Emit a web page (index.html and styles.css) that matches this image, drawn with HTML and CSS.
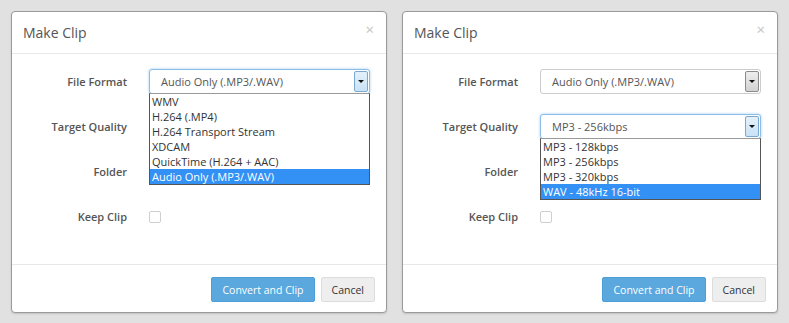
FILE: index.html
```html
<!DOCTYPE html>
<html lang="en">
<head>
    <meta charset="UTF-8">
    <title>Make Clip</title>
    <link rel="stylesheet" href="styles.css">
</head>
<body>
    <div class="page">
        <!-- Dialog with the file format list open -->
        <div class="modal">
            <div class="modal-header">
                <h4 class="modal-title">Make Clip</h4>
                <span class="close">&times;</span>
            </div>
            <div class="modal-body">
                <div class="form-row">
                    <label>File Format</label>
                    <div class="select focused">
                        <span class="select-text">Audio Only (.MP3/.WAV)</span>
                        <span class="select-btn"><span class="arrow"></span></span>
                        <ul class="options">
                            <li>WMV</li>
                            <li>H.264 (.MP4)</li>
                            <li>H.264 Transport Stream</li>
                            <li>XDCAM</li>
                            <li>QuickTime (H.264 + AAC)</li>
                            <li class="active">Audio Only (.MP3/.WAV)</li>
                        </ul>
                    </div>
                </div>
                <div class="form-row">
                    <label>Target Quality</label>
                    <!-- covered by the open list above -->
                    <div class="select">
                        <span class="select-text"></span>
                        <span class="select-btn"><span class="arrow"></span></span>
                    </div>
                </div>
                <div class="form-row">
                    <label>Folder</label>
                    <div class="field"></div>
                </div>
                <div class="form-row">
                    <label>Keep Clip</label>
                    <span class="checkbox"></span>
                </div>
            </div>
            <div class="modal-footer">
                <button class="btn btn-primary">Convert and Clip</button>
                <button class="btn btn-default">Cancel</button>
            </div>
        </div>

        <!-- Dialog with the quality list open -->
        <div class="modal">
            <div class="modal-header">
                <h4 class="modal-title">Make Clip</h4>
                <span class="close">&times;</span>
            </div>
            <div class="modal-body">
                <div class="form-row">
                    <label>File Format</label>
                    <div class="select">
                        <span class="select-text">Audio Only (.MP3/.WAV)</span>
                        <span class="select-btn"><span class="arrow"></span></span>
                    </div>
                </div>
                <div class="form-row">
                    <label>Target Quality</label>
                    <div class="select focused">
                        <span class="select-text">MP3 - 256kbps</span>
                        <span class="select-btn"><span class="arrow"></span></span>
                        <ul class="options">
                            <li>MP3 - 128kbps</li>
                            <li>MP3 - 256kbps</li>
                            <li>MP3 - 320kbps</li>
                            <li class="active">WAV - 48kHz 16-bit</li>
                        </ul>
                    </div>
                </div>
                <div class="form-row">
                    <label>Folder</label>
                    <div class="field"></div>
                </div>
                <div class="form-row">
                    <label>Keep Clip</label>
                    <span class="checkbox"></span>
                </div>
            </div>
            <div class="modal-footer">
                <button class="btn btn-primary">Convert and Clip</button>
                <button class="btn btn-default">Cancel</button>
            </div>
        </div>
    </div>
</body>
</html>
```

FILE: styles.css
```css
body {
    margin: 0;
    background-color: #e1e1e1;
    font-family: "Open Sans", "DejaVu Sans", sans-serif;
    font-size: 11px;
    color: #555;
}

.page {
    display: flex;
    gap: 15px;
    padding: 11px;
}

.modal {
    width: 376px;
    height: 302px;
    box-sizing: border-box;
    background: white;
    border: 1px solid #9a9a9a;
    border-radius: 4px;
    box-shadow: 0 1px 2px rgba(0,0,0,0.15);
    display: flex;
    flex-direction: column;
}

.modal-header {
    height: 41px;
    border-bottom: 1px solid #e8e8e8;
    display: flex;
    align-items: center;
    justify-content: space-between;
    padding: 0 12px 0 11px;
}

.modal-title {
    margin: 0;
    font-size: 14px;
    font-weight: normal;
    color: #555;
}

.close {
    font-size: 15px;
    color: #c4c4c4;
    margin-top: -8px;
}

.modal-body {
    flex: 1;
    padding-top: 15px;
    display: flex;
    flex-direction: column;
    gap: 20px;
}

.form-row {
    display: flex;
    align-items: center;
    height: 25px;
    gap: 22px;
}

label {
    width: 115px;
    text-align: right;
    font-weight: 600;
    color: #555;
}

.select,
.field {
    position: relative;
    width: 221px;
    height: 25px;
    box-sizing: border-box;
    border: 1px solid #ccc;
    border-radius: 3px;
    background: white;
    display: flex;
    align-items: center;
}

.select-text {
    flex: 1;
    padding-left: 11px;
    color: #555;
}

.select-btn {
    width: 12px;
    align-self: stretch;
    margin: 1px;
    border: 1px solid #8a8a8a;
    border-radius: 2px;
    background: linear-gradient(#eee, #d2d2d2);
    display: flex;
    align-items: center;
    justify-content: center;
}

.arrow {
    width: 0;
    height: 0;
    border-left: 3px solid transparent;
    border-right: 3px solid transparent;
    border-top: 3px solid #111;
}

.select.focused {
    border-color: #8cbde6;
    box-shadow: 0 0 3px rgba(102,175,233,0.6);
}

.select.focused .select-btn {
    border-color: #7ca8d0;
    background: linear-gradient(#e4f1fb, #c9e2f6);
}

.options {
    position: absolute;
    top: 100%;
    left: -1px;
    right: -1px;
    margin: 0;
    padding: 0;
    list-style: none;
    background: white;
    border: 1px solid #555;
    border-top-color: #999;
    z-index: 2;
}

.options li {
    height: 15px;
    line-height: 15px;
    padding-left: 2px;
    color: #333;
    white-space: nowrap;
}

.options li.active {
    background-color: #3391f6;
    color: white;
}

.checkbox {
    width: 12px;
    height: 12px;
    box-sizing: border-box;
    border: 1px solid #cfcfcf;
    border-radius: 2px;
}

.modal-footer {
    border-top: 1px solid #e8e8e8;
    padding: 12px 11px 10px;
    display: flex;
    justify-content: flex-end;
    gap: 6px;
}

.btn {
    height: 25px;
    padding: 0 10px;
    font-family: inherit;
    font-size: 10.5px;
    border-radius: 2px;
    cursor: pointer;
}

.btn-primary {
    background-color: #5aa8de;
    border: 1px solid #4d9dd6;
    color: white;
}

.btn-default {
    background-color: #eeeeee;
    border: 1px solid #dcdcdc;
    color: #333;
}
```
